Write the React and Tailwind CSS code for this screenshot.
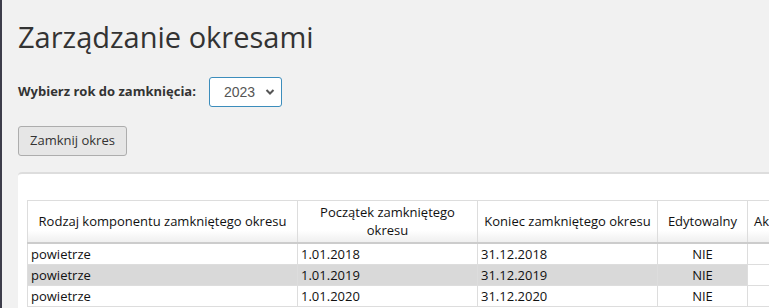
import React from "react";

const rows = [
  { a: "powietrze", b: "1.01.2018", c: "31.12.2018", d: "NIE", alt: false },
  { a: "powietrze", b: "1.01.2019", c: "31.12.2019", d: "NIE", alt: true },
  { a: "powietrze", b: "1.01.2020", c: "31.12.2020", d: "NIE", alt: false },
];

export default function App() {
  return (
    <div
      className="w-[769px] h-[308px] overflow-hidden bg-[#f1f1f1] border-l-[2px] border-[#3d3d4a] text-[#333]"
      style={{ fontFamily: '"Open Sans", sans-serif' }}
    >
      <div className="pl-[16px]">
        <h1 className="pt-[19px] text-[29px] leading-[35px] font-normal text-[#333]">
          Zarządzanie okresami
        </h1>
        <div className="mt-[23px] flex items-center h-[30px]">
          <span className="text-[13px] font-bold text-[#333]">Wybierz rok do zamknięcia:</span>
          <div className="ml-[13px] w-[73px] h-[30px] border border-[#3c8dbc] rounded-[3px] bg-white flex items-center justify-between pl-[14px] pr-[6px]">
            <span className="text-[14px] text-[#555]" style={{ fontFamily: '"Liberation Sans", sans-serif' }}>2023</span>
            <svg width="10" height="8" viewBox="0 0 10 8">
              <path d="M1.5 2 L5 5.5 L8.5 2" fill="none" stroke="#555" strokeWidth="2" />
            </svg>
          </div>
        </div>
        <div className="mt-[19px]">
          <button className="h-[30px] px-[11px] bg-[#e6e6e6] border border-[#adadad] rounded-[3px] text-[13px] text-[#333]">
            Zamknij okres
          </button>
        </div>
        <div className="mt-[16px] bg-white border-t-[2px] border-[#dddddd] rounded-tl-[4px] pt-[26px] pl-[9px] h-[200px]">
          <table className="border-collapse text-[13px] text-[#111] table-fixed w-[900px]">
            <colgroup>
              <col className="w-[270px]" />
              <col className="w-[180px]" />
              <col className="w-[180px]" />
              <col className="w-[90px]" />
              <col className="w-[180px]" />
            </colgroup>
            <thead>
              <tr className="h-[42px] bg-gradient-to-b from-white from-70% to-[#eeeeee]">
                <th className="border border-[#dddddd] border-b-[2px] border-b-[#cccccc] font-normal text-center px-[4px] py-0 leading-[18px]">
                  Rodzaj komponentu zamkniętego okresu
                </th>
                <th className="border border-[#dddddd] border-b-[2px] border-b-[#cccccc] font-normal text-center px-[4px] py-0 leading-[18px]">
                  Początek zamkniętego okresu
                </th>
                <th className="border border-[#dddddd] border-b-[2px] border-b-[#cccccc] font-normal text-center px-[4px] py-0 leading-[18px]">
                  Koniec zamkniętego okresu
                </th>
                <th className="border border-[#dddddd] border-b-[2px] border-b-[#cccccc] font-normal text-center px-[4px] py-0 leading-[18px]">
                  Edytowalny
                </th>
                <th className="border border-[#dddddd] border-b-[2px] border-b-[#cccccc] font-normal text-left px-[6px] py-0 leading-[18px] whitespace-nowrap">
                  Akcje
                </th>
              </tr>
            </thead>
            <tbody>
              {rows.map((r, i) => (
                <tr key={i} className={r.alt ? "h-[21px] bg-[#d9d9d9]" : "h-[21px] bg-white"}>
                  <td className="border border-[#dddddd] px-[3px] leading-[20px]">{r.a}</td>
                  <td className="border border-[#dddddd] px-[3px] leading-[20px]">{r.b}</td>
                  <td className="border border-[#dddddd] px-[3px] leading-[20px]">{r.c}</td>
                  <td className="border border-[#dddddd] px-[3px] leading-[20px] text-center">{r.d}</td>
                  <td className="border border-[#dddddd] px-[3px] leading-[20px] bg-white"></td>
                </tr>
              ))}
            </tbody>
          </table>
        </div>
      </div>
    </div>
  );
}
